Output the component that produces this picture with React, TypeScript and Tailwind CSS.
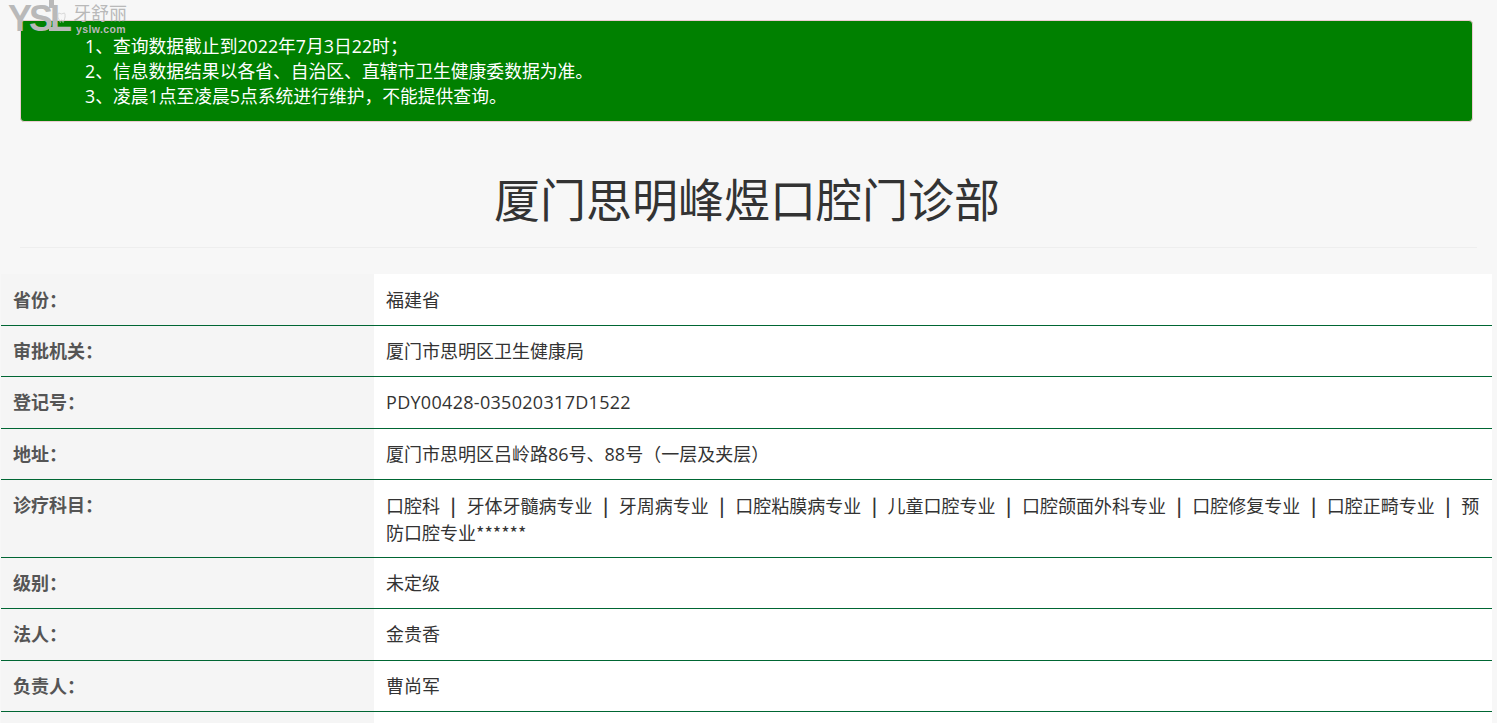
const rows: { label: string; value: string[]; className?: string }[] = [
  { label: '省份：', value: ['福建省'] },
  { label: '审批机关：', value: ['厦门市思明区卫生健康局'] },
  { label: '登记号：', value: ['PDY00428-035020317D1522'], className: 'tracking-[0.3px]' },
  { label: '地址：', value: ['厦门市思明区吕岭路86号、88号（一层及夹层）'] },
  {
    label: '诊疗科目：',
    value: ['口腔科', '牙体牙髓病专业', '牙周病专业', '口腔粘膜病专业', '儿童口腔专业', '口腔颌面外科专业', '口腔修复专业', '口腔正畸专业', '预防口腔专业******'],
    className: "font-['Noto_Sans_CJK_SC',sans-serif]",
  },
  { label: '级别：', value: ['未定级'] },
  { label: '法人：', value: ['金贵香'] },
  { label: '负责人：', value: ['曹尚军'] },
];

function Logo() {
  return (
    <div className="absolute left-[8px] top-0 z-10 flex text-[#b9b9b9]">
      <div className="text-[36px] leading-[38px] font-bold font-['Liberation_Sans',sans-serif] tracking-[-3px]">YSL</div>
      {/* L 的竖笔比字母高一截 */}
      <div className="absolute left-[41px] top-0 h-[8px] w-[5px] bg-[#b9b9b9]" />
      <div className="absolute left-[41px] top-[27px] h-[4px] w-[19px] bg-[#b9b9b9]" />
      <svg className="absolute left-[49px] top-[11px] h-[14px] w-[9px]" viewBox="0 0 10 13" fill="none" stroke="#c9c9c9" strokeWidth="0.8">
        <path d="M2 1c1 0 2 1 3 1s2-1 3-1 1 2 1 4-1 3-1.500 5-1 2-1.500 0-1-2-1.500 0-1 2-1.500 0S1 7 1 5s0-4 1-4z" />
      </svg>
      <div className="ml-[4px] flex flex-col">
        <span className="text-[18px] leading-[24px] font-['Noto_Sans_CJK_SC',sans-serif]">牙舒丽</span>
        <span className="ml-[3px] text-[10.500px] leading-[10px] font-bold tracking-[0.4px] font-['Liberation_Sans',sans-serif]">yslw.com</span>
      </div>
    </div>
  );
}

export default function App() {
  return (
    <div className="relative h-[723px] overflow-hidden bg-[#f7f7f7] font-['Open_Sans','Noto_Sans_CJK_SC',sans-serif] text-[18px] text-[#333]">
      <Logo />
      <div className="pt-[20px] pl-[20px] pr-[24px]">
        <div className="h-[102px] rounded-[4px] border border-[#ebccd1] bg-[#008000] py-[13px] pl-[64px] text-[17.800px] leading-[25px] text-white">
          <p>1、查询数据截止到2022年7月3日22时；</p>
          <p>2、信息数据结果以各省、自治区、直辖市卫生健康委数据为准。</p>
          <p>3、凌晨1点至凌晨5点系统进行维护，不能提供查询。</p>
        </div>
      </div>

      <div className="mx-[20px] mt-[37px] border-b border-[#eee] pb-[12px]">
        <h1 className="pr-[3px] text-center text-[46px] leading-[76px] font-normal font-['Noto_Sans_CJK_SC',sans-serif]">厦门思明峰煜口腔门诊部</h1>
      </div>

      <table className="mt-[26px] ml-[1px] w-[1491px] table-fixed border-collapse [&_tr:first-child_td]:pt-[12.600px]">
        <tbody>
          {rows.map(row => (
            <tr key={row.label} className="border-b border-[#006633]">
              <td className="w-[373px] bg-[#f5f5f5] px-[12px] py-[12px] align-top leading-[26.4px] font-bold text-[#555]">{row.label}</td>
              <td className={`bg-white px-[12px] py-[12px] align-top leading-[26.4px] ${row.className ?? ''}`}>
                {row.value.map((item, i) => (
                  <span key={item}>
                    {i > 0 && <span className="inline-block w-[26.400px] text-center font-bold">|</span>}
                    {item}
                  </span>
                ))}
              </td>
            </tr>
          ))}
          <tr>
            <td className="bg-[#f5f5f5] px-[12px] py-[12px]">&nbsp;</td>
            <td className="bg-white px-[12px] py-[12px]">&nbsp;</td>
          </tr>
        </tbody>
      </table>
    </div>
  );
}
